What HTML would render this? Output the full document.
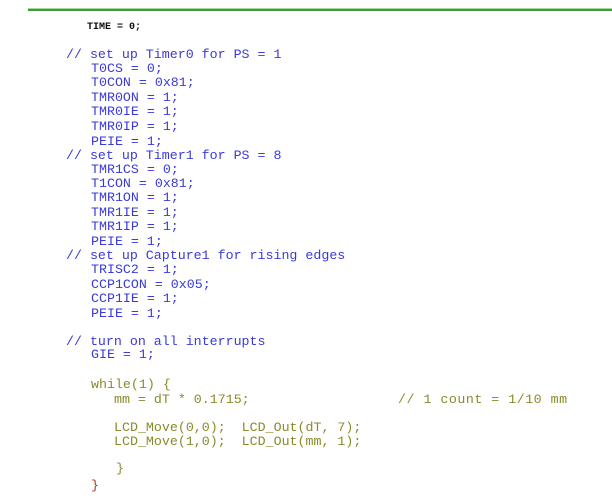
<!DOCTYPE html>
<html><head><meta charset="utf-8"><style>
body{margin:0;width:612px;height:504px;background:#fff;position:relative;overflow:hidden}
.l{position:absolute;white-space:pre;font-family:"Liberation Mono",monospace;font-size:13.3px;line-height:14px;height:14px}
.b{color:#3a3ad8}
.g{color:#8a8a2a}
.t{color:#111;font-size:10px;font-weight:bold}
</style></head><body>
<div style="position:absolute;left:28px;top:8px;width:584px;height:1px;background:#a8d8a0"></div>
<div style="position:absolute;left:28px;top:9px;width:584px;height:2px;background:#3c9a3c"></div>
<div class="l t" style="left:87px;top:21px">TIME = 0;</div>
<div class="l b" style="left:66px;top:48px">// set up Timer0 for PS = 1</div>
<div class="l b" style="left:91px;top:62px">T0CS = 0;</div>
<div class="l b" style="left:91px;top:76px">T0CON = 0x81;</div>
<div class="l b" style="left:91px;top:91px">TMR0ON = 1;</div>
<div class="l b" style="left:91px;top:105px">TMR0IE = 1;</div>
<div class="l b" style="left:91px;top:120px">TMR0IP = 1;</div>
<div class="l b" style="left:91px;top:135px">PEIE = 1;</div>
<div class="l b" style="left:66px;top:149px">// set up Timer1 for PS = 8</div>
<div class="l b" style="left:91px;top:163px">TMR1CS = 0;</div>
<div class="l b" style="left:91px;top:177px">T1CON = 0x81;</div>
<div class="l b" style="left:91px;top:191px">TMR1ON = 1;</div>
<div class="l b" style="left:91px;top:206px">TMR1IE = 1;</div>
<div class="l b" style="left:91px;top:220px">TMR1IP = 1;</div>
<div class="l b" style="left:91px;top:235px">PEIE = 1;</div>
<div class="l b" style="left:66px;top:249px">// set up Capture1 for rising edges</div>
<div class="l b" style="left:91px;top:263px">TRISC2 = 1;</div>
<div class="l b" style="left:91px;top:278px">CCP1CON = 0x05;</div>
<div class="l b" style="left:91px;top:292px">CCP1IE = 1;</div>
<div class="l b" style="left:91px;top:307px">PEIE = 1;</div>
<div class="l b" style="left:66px;top:335px">// turn on all interrupts</div>
<div class="l b" style="left:91px;top:348px">GIE = 1;</div>
<div class="l g" style="left:91px;top:378px">while(1) {</div>
<div class="l g" style="left:114px;top:393px">mm = dT * 0.1715;</div>
<div class="l g" style="left:398px;top:393px;letter-spacing:0.5px">// 1 count = 1/10 mm</div>
<div class="l g" style="left:114px;top:421px">LCD_Move(0,0);  LCD_Out(dT, 7);</div>
<div class="l g" style="left:114px;top:435px">LCD_Move(1,0);  LCD_Out(mm, 1);</div>
<div class="l g" style="left:116px;top:462px">}</div>
<div class="l" style="left:91px;top:479px;color:#a04020">}</div>
</body></html>
